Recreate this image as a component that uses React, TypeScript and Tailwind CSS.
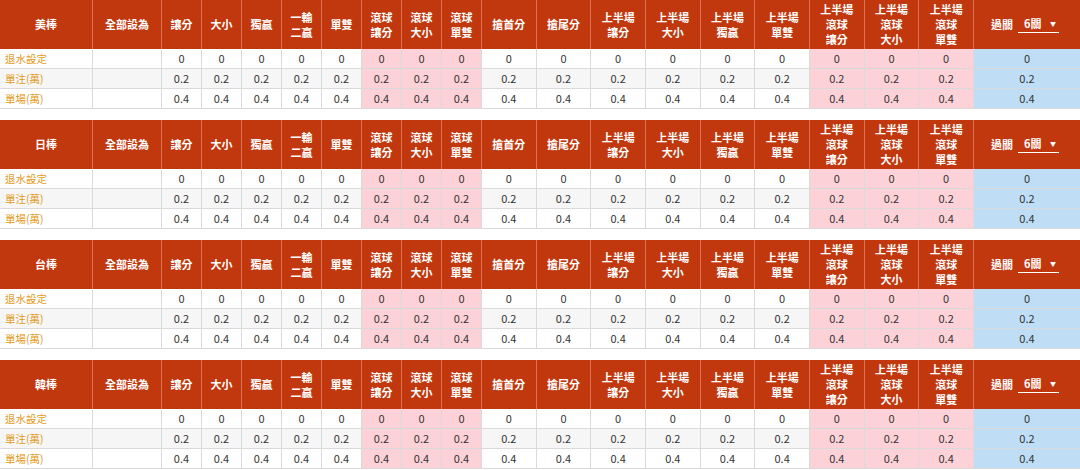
import React from 'react';

type Kind = 'normal' | 'pink' | 'blue';

interface Col {
  label: string;
  kind: Kind;
}

const cols: Col[] = [
  { label: '讓分', kind: 'normal' },
  { label: '大小', kind: 'normal' },
  { label: '獨贏', kind: 'normal' },
  { label: '一輸\n二贏', kind: 'normal' },
  { label: '單雙', kind: 'normal' },
  { label: '滾球\n讓分', kind: 'pink' },
  { label: '滾球\n大小', kind: 'pink' },
  { label: '滾球\n單雙', kind: 'pink' },
  { label: '搶首分', kind: 'normal' },
  { label: '搶尾分', kind: 'normal' },
  { label: '上半場\n讓分', kind: 'normal' },
  { label: '上半場\n大小', kind: 'normal' },
  { label: '上半場\n獨贏', kind: 'normal' },
  { label: '上半場\n單雙', kind: 'normal' },
  { label: '上半場\n滾球\n讓分', kind: 'pink' },
  { label: '上半場\n滾球\n大小', kind: 'pink' },
  { label: '上半場\n滾球\n單雙', kind: 'pink' },
];

const rows = [
  { label: '退水設定', value: '0' },
  { label: '單注(萬)', value: '0.2' },
  { label: '單場(萬)', value: '0.4' },
];

const sports = ['美棒', '日棒', '台棒', '韓棒'];

const gridCols = 'grid grid-cols-[93px_69px_repeat(8,40px)_repeat(9,1fr)_106px]';

function bodyBg(kind: Kind, striped: boolean) {
  if (kind === 'pink') return 'bg-[#fdd1d8]';
  if (kind === 'blue') return 'bg-[#bfdef6]';
  return striped ? 'bg-[#f6f6f6]' : 'bg-white';
}

function SportTable({ name }: { name: string }) {
  return (
    <div className="w-full">
      {/* header */}
      <div className={`${gridCols} h-[49px] bg-[#c1380e] text-white text-[11px] font-bold leading-[15px]`}>
        <div className="flex items-center justify-center border-r border-[#dd7352]">{name}</div>
        <div className="flex items-center justify-center border-r border-[#dd7352]">全部設為</div>
        {cols.map((c, i) => (
          <div
            key={i}
            className="flex items-center justify-center text-center whitespace-pre-line border-r border-[#dd7352]"
          >
            {c.label}
          </div>
        ))}
        <div className="flex items-center justify-center gap-[5px] pr-[4px]">
          <span>過關</span>
          <div className="flex items-center justify-between w-[41px] border-b border-white pl-[6px] pr-[3px] pb-[1px]">
            <span>6關</span>
            <span className="text-[6px]">▼</span>
          </div>
        </div>
      </div>
      {/* body */}
      {rows.map((r, ri) => {
        const striped = ri === 1;
        return (
          <div key={ri} className={`${gridCols} h-[20px] text-[11px] text-[#333333]`}>
            <div
              className={`flex items-center pl-[5px] text-[10.5px] text-[#e49a22] border-r border-b border-[#dadada] ${
                striped ? 'bg-[#f6f6f6]' : 'bg-white'
              }`}
            >
              {r.label}
            </div>
            <div
              className={`border-r border-b border-[#dadada] ${striped ? 'bg-[#f6f6f6]' : 'bg-white'}`}
            />
            {cols.map((c, ci) => (
              <div
                key={ci}
                className={`flex items-center justify-center border-r border-b border-[#dadada] ${bodyBg(
                  c.kind,
                  striped
                )}`}
              >
                {r.value}
              </div>
            ))}
            <div className={`flex items-center justify-center border-b border-[#dadada] ${bodyBg('blue', striped)}`}>
              {r.value}
            </div>
          </div>
        );
      })}
    </div>
  );
}

export default function App() {
  return (
    <div className="w-[1080px] h-[470px] overflow-hidden bg-white font-['Noto_Sans_CJK_TC','Noto_Sans',sans-serif] flex flex-col gap-[11px]">
      {sports.map((s) => (
        <SportTable key={s} name={s} />
      ))}
    </div>
  );
}
